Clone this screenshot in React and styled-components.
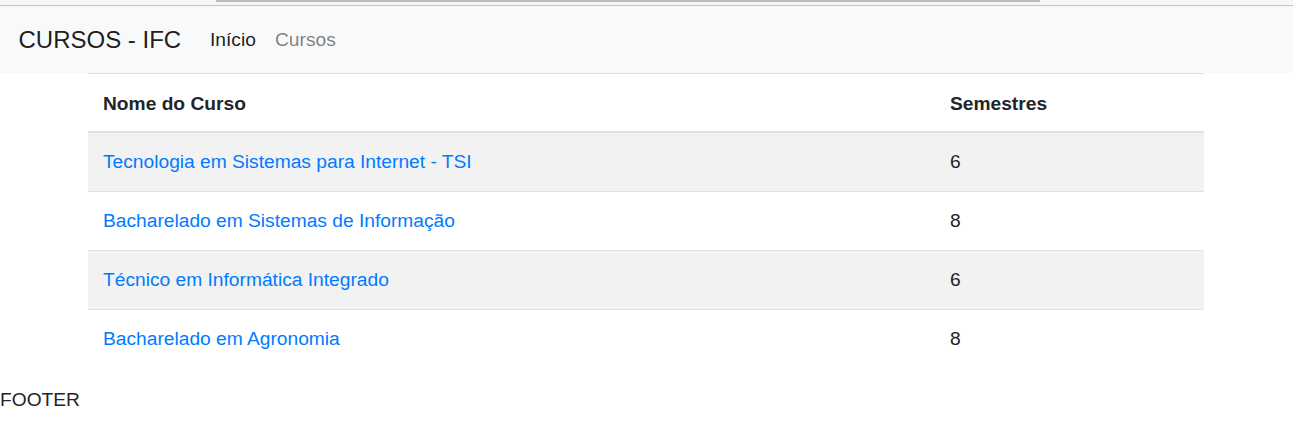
import React from "react";
import styled, { createGlobalStyle } from "styled-components";

const Global = createGlobalStyle`
  html, body { margin: 0; padding: 0; background: #fff; }
  body {
    font-family: "Liberation Sans", Arial, sans-serif;
    font-size: 19.2px;
    line-height: 29px;
    color: #212529;
  }
  * { box-sizing: border-box; }
`;

const TopStrip = styled.div`
  height: 6px;
  background: #f6f6f6;
  border-bottom: 1px solid #c6c6c6;
  padding-left: 216px;
`;

const ScrollThumb = styled.div`
  width: 824px;
  height: 2px;
  background: #bdbdbd;
`;

const Navbar = styled.nav`
  display: flex;
  align-items: center;
  height: 67px;
  padding: 0 18.5px;
  background: #f8f9fa;
`;

const Brand = styled.a`
  font-size: 24px;
  line-height: 36px;
  color: rgba(0, 0, 0, 0.9);
  text-decoration: none;
  margin-right: 19.2px;
`;

const NavList = styled.div`
  display: flex;
`;

const NavLink = styled.a`
  padding: 0 9.6px;
  text-decoration: none;
  color: ${(p) => (p.$active ? "rgba(0,0,0,0.9)" : "rgba(0,0,0,0.5)")};
`;

const Container = styled.main`
  margin-left: 88px;
  width: 1116px;
  margin-bottom: 17px;
`;

const Table = styled.table`
  width: 100%;
  border-collapse: collapse;
`;

const Th = styled.th`
  text-align: left;
  font-weight: 700;
  padding: 14.5px 15px 13.5px;
  border-top: 1px solid #dee2e6;
  border-bottom: 2px solid #dee2e6;
  width: ${(p) => p.$w || "auto"};
`;

const Tr = styled.tr`
  background: ${(p) => (p.$striped ? "rgba(0,0,0,0.05)" : "transparent")};
`;

const Td = styled.td`
  padding: 14px 15px 15px;
  border-top: 1px solid #dee2e6;
`;

const Link = styled.a`
  color: #007bff;
  text-decoration: none;
`;

const Footer = styled.footer``;

const cursos = [
  ["Tecnologia em Sistemas para Internet - TSI", 6],
  ["Bacharelado em Sistemas de Informação", 8],
  ["Técnico em Informática Integrado", 6],
  ["Bacharelado em Agronomia", 8],
];

export default function App() {
  return (
    <>
      <Global />
      <TopStrip>
        <ScrollThumb />
      </TopStrip>
      <Navbar>
        <Brand href="#">CURSOS - IFC</Brand>
        <NavList>
          <NavLink href="#" $active>Início</NavLink>
          <NavLink href="#">Cursos</NavLink>
        </NavList>
      </Navbar>
      <Container>
        <Table>
          <thead>
            <tr>
              <Th $w="847px">Nome do Curso</Th>
              <Th>Semestres</Th>
            </tr>
          </thead>
          <tbody>
            {cursos.map(([nome, sem], i) => (
              <Tr key={nome} $striped={i % 2 === 0}>
                <Td>
                  <Link href="#">{nome}</Link>
                </Td>
                <Td>{sem}</Td>
              </Tr>
            ))}
          </tbody>
        </Table>
      </Container>
      <Footer>FOOTER</Footer>
    </>
  );
}
